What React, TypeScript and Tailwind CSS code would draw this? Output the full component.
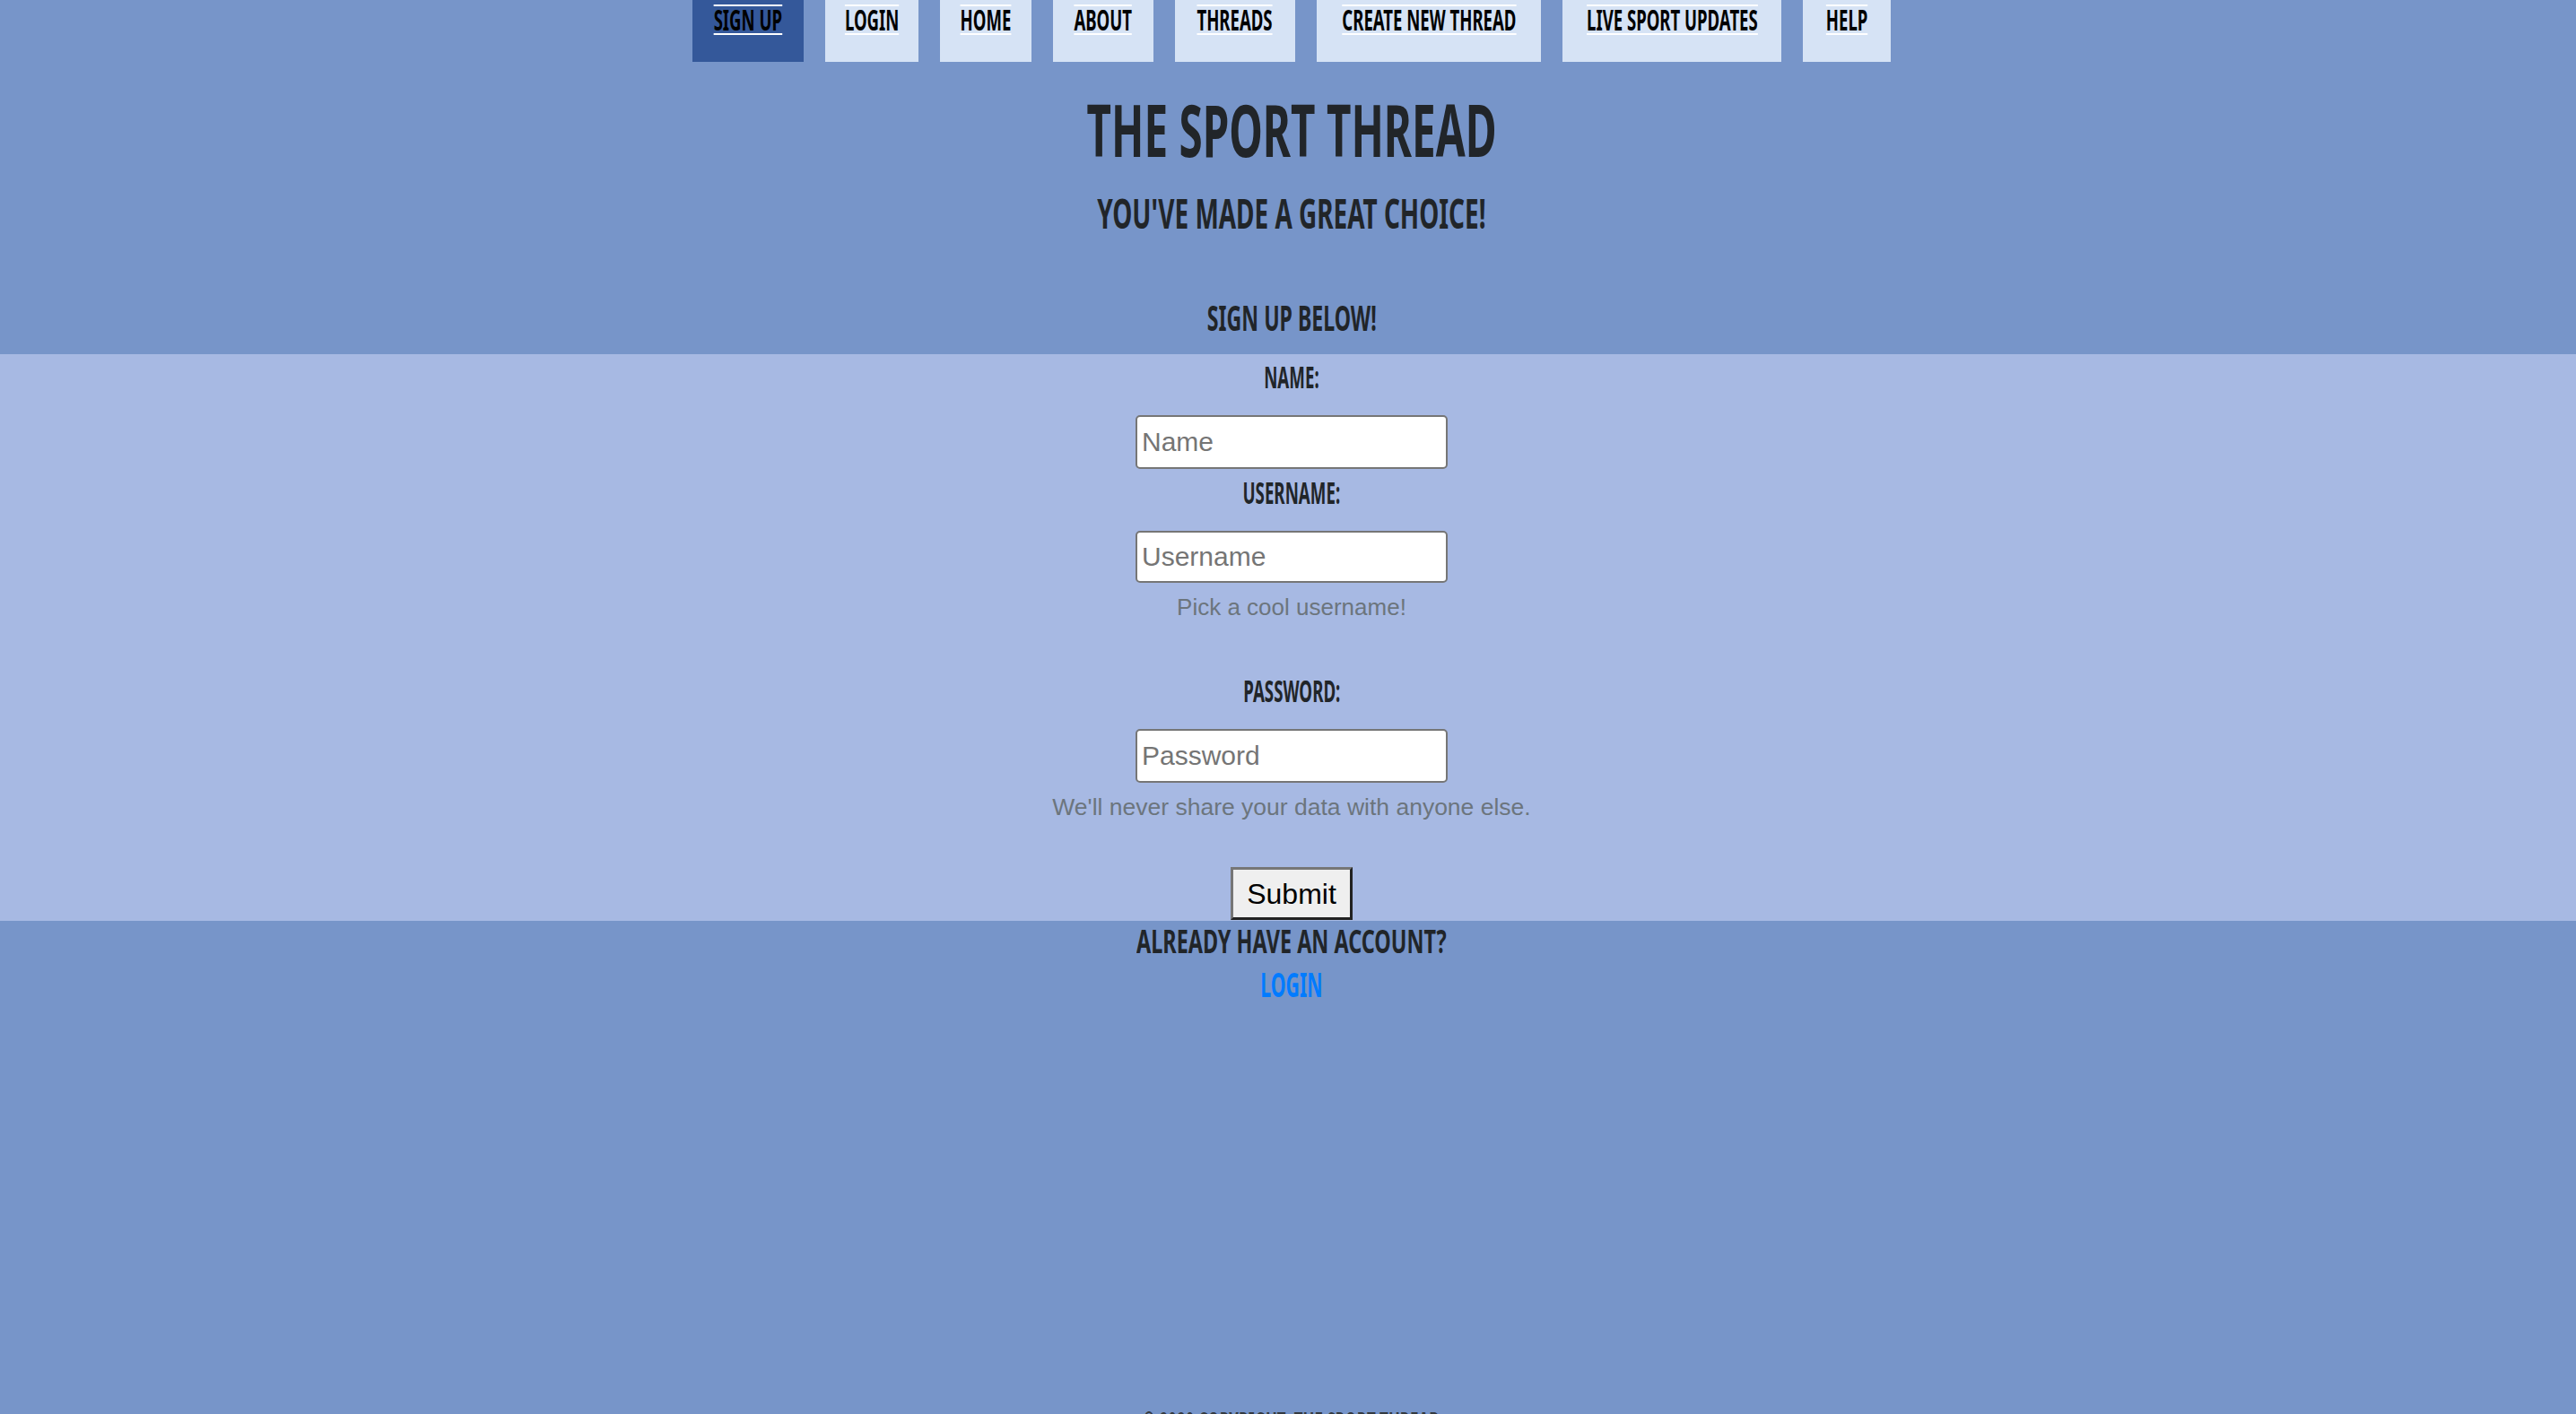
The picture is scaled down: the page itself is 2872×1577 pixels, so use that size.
import React from 'react';

// Bebas-like look: bold sans squeezed horizontally
const display = "font-['Noto_Sans',sans-serif] font-bold uppercase";
const body = "font-['Liberation_Sans',Arial,sans-serif]";

const navItems = [
  { label: 'Sign up', width: 'w-[124px]', active: true },
  { label: 'Login', width: 'w-[104px]' },
  { label: 'Home', width: 'w-[102px]' },
  { label: 'About', width: 'w-[112px]' },
  { label: 'Threads', width: 'w-[134px]' },
  { label: 'Create new thread', width: 'w-[250px]' },
  { label: 'Live sport updates', width: 'w-[244px]' },
  { label: 'Help', width: 'w-[98px]' },
];

function NavBar() {
  return (
    <nav className="flex h-[69px] justify-center gap-[24px]">
      {navItems.map((item) => (
        <a
          key={item.label}
          href="#"
          className={`${item.width} flex h-[69px] justify-center pt-[5px] ${item.active ? 'bg-[#34589a]' : 'bg-[#d6e3f5]'}`}
        >
          <span className={`${display} block h-[34px] shrink-0 scale-x-[0.58] whitespace-nowrap border-y-2 border-white text-[32px] leading-[30px] text-black`}>
            {item.label}
          </span>
        </a>
      ))}
    </nav>
  );
}

function Field({ label, placeholder, type, rowClass, inputClass }: { label: string; placeholder: string; type: string; rowClass: string; inputClass: string }) {
  return (
    <>
      <label className={`${display} ${rowClass} flex scale-x-[0.55] items-center text-[34px] leading-none`}>{label}</label>
      <input
        type={type}
        placeholder={placeholder}
        className={`${body} ${inputClass} w-[348px] rounded-[5px] border-2 border-[#767676] bg-white px-[5px] text-[30px] text-black outline-none placeholder:text-[#757575]`}
      />
    </>
  );
}

export default function App() {
  return (
    <div className="min-h-screen overflow-hidden bg-[#7795c9] pl-[8px] text-[#212529]">
      <NavBar />

      <header className="flex flex-col items-center">
        <h1 className={`${display} flex h-[149px] scale-x-[0.595] items-center text-[80px] leading-none`}>The Sport Thread</h1>
        <h2 className={`${display} flex h-[37px] scale-x-[0.607] items-center text-[46px] leading-none`}>You've made a great choice!</h2>
        <h3 className={`${display} mt-[56px] flex h-[84px] scale-x-[0.593] items-center text-[39px] leading-none`}>Sign up below!</h3>
      </header>

      <form className="-ml-[8px] flex flex-col items-center bg-[#a7b9e3] pb-[1px] pl-[8px]">
        <Field label="Name:" placeholder="Name" type="text" rowClass="h-[50px]" inputClass="mt-[18px] h-[60px]" />
        <Field label="Username:" placeholder="Username" type="text" rowClass="h-[52px]" inputClass="mt-[17px] h-[58px]" />
        <small className={`${body} flex h-[55px] items-center text-[26px] text-[#6c757d]`}>Pick a cool username!</small>
        <Field label="Password:" placeholder="Password" type="password" rowClass="mt-[23px] h-[84px]" inputClass="mt-[1px] h-[60px]" />
        <small className={`${body} flex h-[55px] items-center text-[26.5px] text-[#6c757d]`}>We'll never share your data with anyone else.</small>
        <button
          type="button"
          className={`${body} mt-[39px] h-[59px] w-[136px] border-[3px] border-t-[#767676] border-r-[#222] border-b-[#222] border-l-[#767676] bg-[#efefef] text-[32px] text-black`}
        >
          Submit
        </button>
      </form>

      <section className="flex flex-col items-center">
        <h5 className={`${display} flex h-[46px] scale-x-[0.65] items-center text-[36px] leading-none`}>Already have an account?</h5>
        <a href="#" className={`${display} flex h-[47px] scale-x-[0.56] items-center text-[38px] leading-none text-[#007bff]`}>Login</a>
      </section>

      <footer className="mt-[450px] flex justify-center">
        <p className={`${display} scale-x-[0.53] text-[32px] leading-[32px] text-[#343a40]`}>© 2020 Copyright: The Sport Thread</p>
      </footer>
    </div>
  );
}
